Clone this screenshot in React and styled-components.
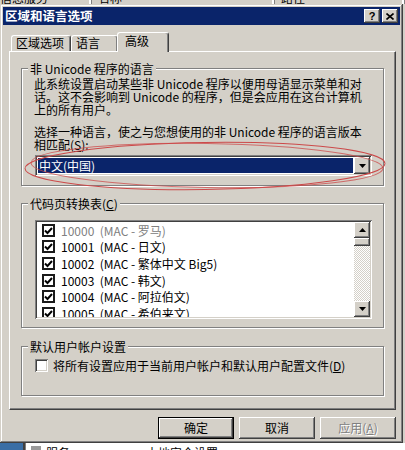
import React from 'react';
import styled, { createGlobalStyle } from 'styled-components';

const FACE = '#D4D0C8';
const buttonRaised = `box-shadow: inset -1px -1px 0 #404040, inset 1px 1px 0 #fff, inset -2px -2px 0 #808080;`;
const windowRaised = `box-shadow: inset -1px -1px 0 #404040, inset 1px 1px 0 ${FACE}, inset -2px -2px 0 #808080, inset 2px 2px 0 #fff;`;
const sunken = `box-shadow: inset 1px 1px 0 #808080, inset -1px -1px 0 #fff, inset 2px 2px 0 #404040, inset -2px -2px 0 ${FACE};`;

const GlobalStyle = createGlobalStyle`
  html, body {
    margin: 0;
    padding: 0;
    background: ${FACE};
  }
  body {
    font-family: "Noto Sans CJK SC", "Liberation Sans", sans-serif;
    font-size: 12px;
    color: #000;
  }
`;

const Root = styled.div`
  position: relative;
  width: 405px;
  height: 450px;
  overflow: hidden;
  display: flex;
  flex-direction: column;
  background: ${FACE};
`;

// the list view header of the window behind
const HeaderStrip = styled.div`
  height: 4px;
  flex: none;
  display: flex;
  overflow: hidden;
  background: ${FACE};
`;
const HeaderCell = styled.div`
  width: ${p => p.$w}px;
  flex: none;
  box-sizing: border-box;
  height: 13px;
  margin-top: -9px;
  padding-left: ${p => p.$pad}px;
  line-height: 13px;
  white-space: nowrap;
  border-right: 1px solid #808080;
  box-shadow: inset -2px 0 0 #fff;
`;

const Dialog = styled.div`
  width: 403px;
  height: 439px;
  flex: none;
  box-sizing: border-box;
  padding: 3px;
  background: ${FACE};
  ${windowRaised}
  display: flex;
  flex-direction: column;
`;

const TitleBar = styled.div`
  height: 18px;
  flex: none;
  display: flex;
  align-items: center;
  padding: 0 2px;
  background: #0A246A;
  color: #fff;
`;
const TitleText = styled.div`
  flex: 1;
  font-weight: bold;
  font-size: 12.5px;
  line-height: 18px;
  white-space: nowrap;
`;
const CaptionButtons = styled.div`
  display: flex;
  gap: 2px;
`;
const CaptionButton = styled.div`
  width: 16px;
  height: 14px;
  background: ${FACE};
  ${buttonRaised}
  display: flex;
  align-items: center;
  justify-content: center;
  color: #000;
  font-family: "Liberation Sans", sans-serif;
  font-weight: bold;
  font-size: 11px;
  line-height: 14px;
`;

const Body = styled.div`
  padding: 7px 4px 0 6px;
  display: flex;
  flex-direction: column;
`;

const TabRow = styled.div`
  height: 19px;
  display: flex;
  align-items: flex-end;
  padding-left: 2px;
`;
const Tab = styled.div`
  position: relative;
  z-index: ${p => (p.$active ? 2 : 1)};
  box-sizing: border-box;
  width: ${p => p.$w}px;
  height: ${p => (p.$active ? 20 : 16)}px;
  margin-left: ${p => (p.$active ? -1 : 0)}px;
  margin-bottom: ${p => (p.$active ? -1 : 0)}px;
  padding-left: ${p => (p.$active ? 7 : 4)}px;
  line-height: ${p => (p.$active ? 16 : 14)}px;
  background: ${FACE};
  border-top: 1px solid #fff;
  border-left: 1px solid #fff;
  border-right: 1px solid #404040;
  border-radius: 3px 3px 0 0;
  box-shadow: inset -1px 0 0 #808080;
  white-space: nowrap;
`;

const Panel = styled.div`
  box-sizing: border-box;
  height: 359px;
  border-top: 1px solid #fff;
  border-left: 1px solid #fff;
  border-right: 1px solid #404040;
  border-bottom: 1px solid #404040;
  box-shadow: inset -1px -1px 0 #808080;
  padding: 16px 11px 0 11px;
  display: flex;
  flex-direction: column;
`;

const Group = styled.div`
  box-sizing: border-box;
  height: ${p => p.$h}px;
  margin-top: ${p => p.$mt || 0}px;
  flex: none;
  border: 1px solid #808080;
  box-shadow: inset 1px 1px 0 #fff, 1px 1px 0 #fff;
  padding: 0 12px;
  display: flex;
  flex-direction: column;
  align-items: flex-start;
`;
const Legend = styled.div`
  height: 13px;
  margin: -7px 0 0 -6px;
  padding: 0 2px;
  background: ${FACE};
  line-height: 13px;
  white-space: nowrap;
`;
const Para = styled.div`
  margin-top: ${p => p.$mt}px;
  line-height: 13px;
  white-space: nowrap;
`;
const Line = styled.div``;
const Key = styled.span`
  text-decoration: underline;
  text-underline-offset: 1px;
`;

const Combo = styled.div`
  box-sizing: border-box;
  width: 337px;
  height: 21px;
  margin: 4px 0 0 1px;
  padding: 2px;
  background: #fff;
  ${sunken}
  display: flex;
`;
const ComboValue = styled.div`
  flex: 1;
  margin: 1px;
  padding-left: 1px;
  background: #0A246A;
  color: #fff;
  line-height: 15px;
  white-space: nowrap;
`;
const ArrowButton = styled.div`
  width: 16px;
  height: ${p => p.$h || 17}px;
  flex: none;
  background: ${FACE};
  ${buttonRaised}
  display: flex;
  align-items: center;
  justify-content: center;
`;

const ListBox = styled.div`
  box-sizing: border-box;
  width: 337px;
  height: 99px;
  margin: 10px 0 0 1px;
  padding: 2px;
  background: #fff;
  ${sunken}
  display: flex;
  overflow: hidden;
`;
const Rows = styled.div`
  flex: 1;
  overflow: hidden;
  padding-left: 5px;
`;
const Row = styled.div`
  height: 16.6px;
  display: flex;
  align-items: center;
  gap: 6px;
  color: ${p => (p.$dim ? '#808080' : '#000')};
  white-space: pre;
`;
const ListCheck = styled.span`
  box-sizing: border-box;
  width: 13px;
  height: 13px;
  flex: none;
  border: 2px solid #1a1a1a;
  background: #fff;
  display: flex;
  align-items: center;
  justify-content: center;
`;
const Scrollbar = styled.div`
  width: 16px;
  flex: none;
  display: flex;
  flex-direction: column;
  background: repeating-conic-gradient(#fff 0 25%, ${FACE} 0 50%) 0 0 / 2px 2px;
`;
const Thumb = styled.div`
  height: 8px;
  flex: none;
  background: ${FACE};
  ${buttonRaised}
`;
const Track = styled.div`
  flex: 1;
`;

const CheckRow = styled.div`
  margin: 6px 0 0 1px;
  display: flex;
  align-items: center;
  gap: 5px;
  line-height: 13px;
  white-space: nowrap;
`;
const Check = styled.span`
  width: 13px;
  height: 13px;
  flex: none;
  background: #fff;
  ${sunken}
`;

const ButtonRow = styled.div`
  margin-top: 7px;
  display: flex;
  justify-content: flex-end;
  gap: 5px;
`;
const PushButton = styled.div`
  width: 76px;
  height: 22px;
  box-sizing: border-box;
  background: ${FACE};
  ${p =>
    p.$default
      ? `box-shadow: inset 0 0 0 1px #000, inset -2px -2px 0 #404040, inset 2px 2px 0 #fff, inset -3px -3px 0 #808080;`
      : buttonRaised}
  display: flex;
  align-items: center;
  justify-content: center;
  color: ${p => (p.$disabled ? '#808080' : '#000')};
  text-shadow: ${p => (p.$disabled ? '1px 1px 0 #fff' : 'none')};
  line-height: 22px;
  white-space: nowrap;
`;

// taskbar / window behind, peeking out below the dialog
const BottomStrip = styled.div`
  flex: 1;
  display: flex;
  overflow: hidden;
`;
const BlueBlock = styled.div`
  width: 23px;
  background: #3a6ea5;
`;
const BottomList = styled.div`
  flex: 1;
  display: flex;
  align-items: flex-start;
  padding: 3px 0 0 6px;
  background: #fff;
  border-left: 2px solid #404040;
  box-shadow: inset 1px 0 0 #808080;
  line-height: 13px;
  white-space: nowrap;
`;
const TinyIcon = styled.span`
  width: 10px;
  height: 8px;
  margin-right: 5px;
  background: #9a9a9a;
`;
const BottomText = styled.span`
  width: ${p => p.$w}px;
  flex: none;
`;

const Annotation = styled.svg`
  position: absolute;
  left: 0;
  top: 0;
  pointer-events: none;
`;

const UpArrow = () => (
  <svg width="7" height="4" viewBox="0 0 7 4"><path d="M3.5 0 L7 4 L0 4 Z" fill="#000" /></svg>
);
const DownArrow = () => (
  <svg width="7" height="4" viewBox="0 0 7 4"><path d="M0 0 L7 0 L3.5 4 Z" fill="#000" /></svg>
);
const CheckMark = () => (
  <svg width="9" height="9" viewBox="0 0 9 9">
    <polyline points="1,4.5 3.5,7 8,2" fill="none" stroke="#000" strokeWidth="2" />
  </svg>
);

const pages = [
  { id: 10000, name: 'MAC - 罗马', dim: true },
  { id: 10001, name: 'MAC - 日文' },
  { id: 10002, name: 'MAC - 繁体中文 Big5' },
  { id: 10003, name: 'MAC - 韩文' },
  { id: 10004, name: 'MAC - 阿拉伯文' },
  { id: 10005, name: 'MAC - 希伯来文' },
];

const App = () => (
  <Root>
    <GlobalStyle />
    <HeaderStrip>
      <HeaderCell $w={92} $pad={0}>信息服务</HeaderCell>
      <HeaderCell $w={183} $pad={6}>名称</HeaderCell>
      <HeaderCell $w={130} $pad={6}>路径</HeaderCell>
    </HeaderStrip>

    <Dialog>
      <TitleBar>
        <TitleText>区域和语言选项</TitleText>
        <CaptionButtons>
          <CaptionButton>?</CaptionButton>
          <CaptionButton>
            <svg width="8" height="7" viewBox="0 0 8 7">
              <path d="M0.5 0.5 L7.5 6.5 M7.5 0.5 L0.5 6.5" stroke="#000" strokeWidth="1.6" />
            </svg>
          </CaptionButton>
        </CaptionButtons>
      </TitleBar>

      <Body>
        <TabRow>
          <Tab $w={60}>区域选项</Tab>
          <Tab $w={47}>语言</Tab>
          <Tab $w={52} $active>高级</Tab>
        </TabRow>

        <Panel>
          <Group $h={118}>
            <Legend>非 Unicode 程序的语言</Legend>
            <Para $mt={2}>
              <Line>此系统设置启动某些非 Unicode 程序以便用母语显示菜单和对</Line>
              <Line>话。这不会影响到 Unicode 的程序，但是会应用在这台计算机</Line>
              <Line>上的所有用户。</Line>
            </Para>
            <Para $mt={9}>
              <Line>选择一种语言，使之与您想使用的非 Unicode 程序的语言版本</Line>
              <Line>相匹配(<Key>S</Key>):</Line>
            </Para>
            <Combo>
              <ComboValue>中文(中国)</ComboValue>
              <ArrowButton $h={17}><DownArrow /></ArrowButton>
            </Combo>
          </Group>

          <Group $h={125} $mt={17}>
            <Legend>代码页转换表(<Key>C</Key>)</Legend>
            <ListBox>
              <Rows>
                {pages.map(p => (
                  <Row key={p.id} $dim={p.dim}>
                    <ListCheck><CheckMark /></ListCheck>
                    <span>{p.id}  ({p.name})</span>
                  </Row>
                ))}
              </Rows>
              <Scrollbar>
                <ArrowButton $h={16}><UpArrow /></ArrowButton>
                <Thumb />
                <Track />
                <ArrowButton $h={16}><DownArrow /></ArrowButton>
              </Scrollbar>
            </ListBox>
          </Group>

          <Group $h={50} $mt={18}>
            <Legend>默认用户帐户设置</Legend>
            <CheckRow>
              <Check />
              <span>将所有设置应用于当前用户帐户和默认用户配置文件(<Key>D</Key>)</span>
            </CheckRow>
          </Group>
        </Panel>

        <ButtonRow>
          <PushButton $default>确定</PushButton>
          <PushButton>取消</PushButton>
          <PushButton $disabled>应用(<Key>A</Key>)</PushButton>
        </ButtonRow>
      </Body>
    </Dialog>

    <BottomStrip>
      <BlueBlock />
      <BottomList>
        <TinyIcon />
        <BottomText $w={100}>服务</BottomText>
        <BottomText $w={120}>本地安全设置</BottomText>
      </BottomList>
    </BottomStrip>

    <Annotation width="405" height="450" viewBox="0 0 405 450">
      <ellipse cx="205" cy="166" rx="180" ry="23.5" fill="none" stroke="#cc4a4a" strokeWidth="1" transform="rotate(-0.8 205 166)" />
      <ellipse cx="207" cy="165.5" rx="176" ry="22" fill="none" stroke="#cc4a4a" strokeWidth="1" opacity="0.75" transform="rotate(0.9 207 165.5)" />
    </Annotation>
  </Root>
);

export default App;
